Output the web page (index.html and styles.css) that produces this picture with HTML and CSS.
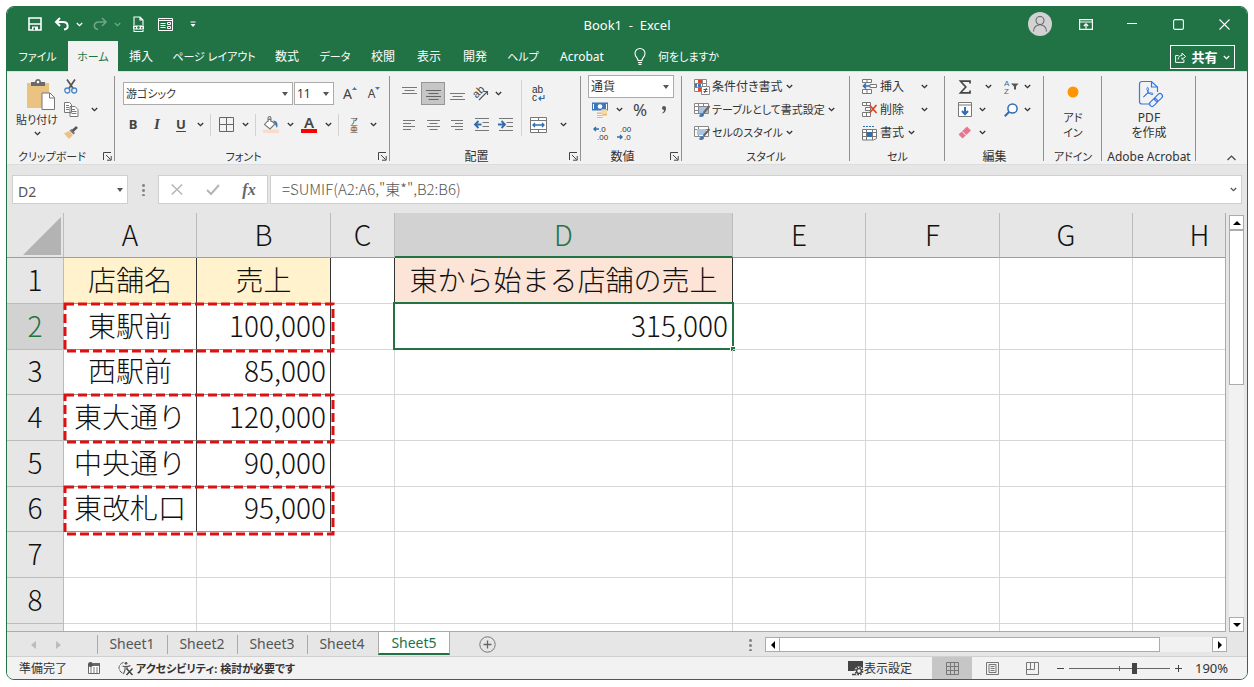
FILE: index.html
```html
<!DOCTYPE html>
<html lang="ja">
<head>
<meta charset="utf-8">
<title>Book1 - Excel</title>
<link rel="stylesheet" href="styles.css">
</head>
<body>
<svg class="defs" aria-hidden="true">
  <symbol id="chev" viewBox="0 0 7 5"><path d="M.8 1 3.5 3.7 6.2 1" fill="none" stroke="currentColor" stroke-width="1.3"/></symbol>
  <symbol id="tri" viewBox="0 0 6 4"><path d="M0 0h6L3 4z" fill="currentColor"/></symbol>
  <symbol id="launch" viewBox="0 0 9 9"><path d="M.5 8V.5H8M3 3l4.500 4.500M8.200 4v4.200H4" fill="none" stroke="#444"/></symbol>
</svg>
<div class="window">
  <header class="titlebar">
    <div class="quick">
      <button class="qb" aria-label="上書き保存"><svg width="14" height="14" viewBox="0 0 14 14"><path d="M1 1h12v12H1z" fill="none" stroke="#fff" stroke-width="1.6"/><path d="M1 7h12" stroke="#fff" stroke-width="1.4"/><path d="M4 9.500h6V13H4z" fill="#fff"/><path d="M5.500 10.500h1.500V13H5.500z" fill="#217346"/></svg></button>
      <button class="qb" aria-label="元に戻す"><svg width="16" height="14" viewBox="0 0 16 14"><path d="M6 1 2 5l4 4M2 5h7c6 0 6 7 1 7.500" fill="none" stroke="#fff" stroke-width="2"/></svg></button>
      <button class="qc" aria-label="元に戻す一覧"><svg width="7" height="5"><use href="#chev"/></svg></button>
      <button class="qb dim" aria-label="やり直し"><svg width="16" height="14" viewBox="0 0 16 14"><path d="M10 1l4 4-4 4M14 5H7C1 5 1 12 6 12.500" fill="none" stroke="#fff" stroke-width="1.600"/></svg></button>
      <button class="qc dim" aria-label="やり直し一覧"><svg width="7" height="5"><use href="#chev"/></svg></button>
      <button class="qb wide" aria-label="PDFに変換"><svg width="13" height="16" viewBox="0 0 13 16"><path d="M2 9V1h6l3 3v5M8 1v3h3M2 14v1.500h9V14" fill="none" stroke="#fff" stroke-width="1.100"/><path d="M1 9.500h11v4H1z" fill="#fff"/><circle cx="6.500" cy="11.500" r="1.300" fill="#217346"/><path d="M2.500 11h1.500v1.500H2.500zM9 11h1.500v1.500H9z" fill="#217346"/></svg></button>
      <button class="qb" aria-label="フォーム"><svg width="15" height="13" viewBox="0 0 15 13"><path d="M.5.5h14v12H.5zM1 2.500h13M2.500 5.500h5M2.500 7.500h5M2.500 9.500h5M9.500 4.500h3v2h-3zM9.500 8.500h3v2h-3z" fill="none" stroke="#fff"/></svg></button>
      <button class="qb" aria-label="カスタマイズ"><svg width="6" height="7" viewBox="0 0 6 7"><path d="M.5 1h5" stroke="#fff"/><path d="M.5 3h5L3 6z" fill="#fff"/></svg></button>
    </div>
    <h1 class="title">Book1&nbsp; -&nbsp; Excel</h1>
    <div class="wincontrols">
      <button class="wb" aria-label="アカウント"><svg width="24" height="24" viewBox="0 0 24 24"><circle cx="12" cy="12" r="12" fill="#d2d2d2"/><circle cx="12" cy="8.500" r="4" fill="none" stroke="#666" stroke-width="1.100"/><path d="M5.500 19.500c0-9 13-9 13 0" fill="none" stroke="#666" stroke-width="1.100"/></svg></button>
      <button class="wb" aria-label="リボンの表示オプション"><svg width="14" height="11" viewBox="0 0 14 11"><path d="M.6.6h12.800v9.800H.6zM1 3h12M7 9.500V5M4.800 7 7 4.800 9.200 7" fill="none" stroke="#fff" stroke-width="1.200"/></svg></button>
      <button class="wb" aria-label="最小化"><svg width="10" height="10" viewBox="0 0 10 10"><path d="M0 4.500h10" stroke="#fff"/></svg></button>
      <button class="wb" aria-label="最大化"><svg width="11" height="11" viewBox="0 0 11 11"><rect x=".6" y=".6" width="9.800" height="9.800" rx="1.500" fill="none" stroke="#fff" stroke-width="1.100"/></svg></button>
      <button class="wb" aria-label="閉じる"><svg width="11" height="11" viewBox="0 0 11 11"><path d="M.5.5l10 10M10.500.5l-10 10" stroke="#fff" stroke-width="1.100"/></svg></button>
    </div>
  </header>

  <nav class="tabs" aria-label="リボン">
    <button class="tab file kana">ファイル</button>
    <button class="tab mid kana active">ホーム</button>
    <button class="tab">挿入</button>
    <button class="tab long kana">ページ レイアウト</button>
    <button class="tab">数式</button>
    <button class="tab mid kana">データ</button>
    <button class="tab">校閲</button>
    <button class="tab">表示</button>
    <button class="tab">開発</button>
    <button class="tab mid kana">ヘルプ</button>
    <button class="tab acro">Acrobat</button>
    <button class="tell kana"><svg width="12" height="17" viewBox="0 0 12 17"><path d="M4 12.500c0-3-3-3.500-3-7a5 5 0 0 1 10 0c0 3.500-3 4-3 7zM4 14.500h4M4.500 16.400h3" fill="none" stroke="#fff" stroke-width="1.100"/></svg>何をしますか</button>
    <button class="share"><svg width="11" height="11" viewBox="0 0 11 11"><path d="M3.500 3.500H.6v6.900h8.300V7.500M3 7.500c.5-3 2-4 4-4V1l3.500 3.500L7 7.500V5.500" fill="none" stroke="#fff"/></svg>共有<svg width="7" height="5"><use href="#chev"/></svg></button>
  </nav>

  <section class="ribbon" aria-label="ホーム">
    <div class="group g-clip">
      <div class="body">
        <button class="big paste"><svg width="28" height="31" viewBox="0 0 28 31"><path d="M0 4h22v25H0z" fill="#eac282"/><path d="M4 3h4c0-4 6-4 6 0h4v4H4z" fill="#6a6a6a"/><circle cx="11" cy="3" r="1.300" fill="#fff"/><path d="M15 14h8l4.500 4.500v12H15z" fill="#fff" stroke="#777"/><path d="M22.500 14v5h5" fill="none" stroke="#777"/></svg><span class="kana">貼り付け</span><svg width="7" height="5"><use href="#chev"/></svg></button>
        <div class="stack">
          <div class="r"><button class="ib" aria-label="切り取り"><svg width="14" height="15" viewBox="0 0 14 15"><path d="M3 .5 9.500 10M11 .5 4.500 10" stroke="#555" stroke-width="1.700"/><circle cx="3.300" cy="11.500" r="2.500" fill="none" stroke="#4a86c5" stroke-width="1.300"/><circle cx="10.200" cy="11.500" r="2.500" fill="none" stroke="#4a86c5" stroke-width="1.300"/></svg></button></div>
          <div class="r"><button class="ib" aria-label="コピー"><svg width="15" height="15" viewBox="0 0 15 15"><path d="M.5.5h5l2 2v8h-7zM6 4.500h5l3 3v7H6z" fill="#fff" stroke="#777"/><path d="M2 3.500h3M2 5.500h3M2 7.500h3M7.500 7.500H11M7.500 9.500h5M7.500 11.500h5" stroke="#4a86c5"/></svg></button><button class="cv" aria-label="コピー一覧"><svg width="7" height="5"><use href="#chev"/></svg></button></div>
          <div class="r"><button class="ib" aria-label="書式のコピー"><svg width="14" height="13" viewBox="0 0 14 13"><path d="M0 7.500 5 5l4 4-4 4z" fill="#eac282"/><path d="m5.500 4.500 2-1.500 3.500 4-1.500 1.500z" fill="#777"/><path d="m8.500 5 4.500-4" stroke="#555" stroke-width="2.600"/></svg></button></div>
        </div>
      </div>
      <div class="foot kana">クリップボード<button class="lb" aria-label="クリップボードの詳細"><svg width="9" height="9"><use href="#launch"/></svg></button></div>
    </div>

    <div class="group g-font">
      <div class="body col">
        <div class="r tall">
          <div class="combo wfont"><select class="kana" aria-label="フォント"><option>游ゴシック</option></select><svg width="6" height="4"><use href="#tri"/></svg></div>
          <div class="combo wsize"><select aria-label="サイズ"><option>11</option></select><svg width="6" height="4"><use href="#tri"/></svg></div>
          <button class="ib grow" aria-label="フォントサイズの拡大">A<svg width="5" height="3" viewBox="0 0 5 3"><path d="M0 3h5L2.500 0z" fill="#4a78b5"/></svg></button>
          <button class="ib shrink" aria-label="フォントサイズの縮小">A<svg width="5" height="3" viewBox="0 0 5 3"><path d="M0 0h5L2.500 3z" fill="#4a78b5"/></svg></button>
        </div>
        <div class="r mid">
          <button class="ib bold">B</button><button class="ib ital">I</button><button class="ib under">U</button><button class="cv" aria-label="下線一覧"><svg width="7" height="5"><use href="#chev"/></svg></button>
          <i class="vs"></i>
          <button class="ib" aria-label="罫線"><svg width="15" height="15" viewBox="0 0 15 15"><path d="M.5.5h14v14H.5zM7.500.5v14M.5 7.500h14" fill="none" stroke="#666"/></svg></button><button class="cv" aria-label="罫線一覧"><svg width="7" height="5"><use href="#chev"/></svg></button>
          <i class="vs"></i>
          <button class="ib" aria-label="塗りつぶしの色"><svg width="16" height="17" viewBox="0 0 16 17"><path d="M0 13.500h16V17H0z" fill="#fbdccb"/><path d="m6.500 3 5.500 5-5 5-5.500-4.500zM5 6V2.500c0-2.500 3-2.500 3 0V6" fill="#fff" stroke="#777" stroke-width="1.100"/><path d="M10 4.500c4 0 5.500 3.500 4 7.500-1.500-2-1.500-4-4-7.500z" fill="#3f76b5"/></svg></button><button class="cv" aria-label="塗りつぶし一覧"><svg width="7" height="5"><use href="#chev"/></svg></button>
          <button class="ib fcol" aria-label="フォントの色">A</button><button class="cv" aria-label="フォントの色一覧"><svg width="7" height="5"><use href="#chev"/></svg></button>
          <i class="vs"></i>
          <button class="ib ruby" aria-label="ふりがな"><span>ア</span><span>亜</span></button><button class="cv" aria-label="ふりがな一覧"><svg width="7" height="5"><use href="#chev"/></svg></button>
        </div>
      </div>
      <div class="foot kana">フォント<button class="lb" aria-label="フォントの詳細"><svg width="9" height="9"><use href="#launch"/></svg></button></div>
    </div>

    <div class="group g-align">
      <div class="body">
        <div class="stack">
          <div class="r tall">
            <button class="ib" aria-label="上揃え"><svg width="15" height="16" viewBox="0 0 15 16"><path d="M0 1.500h15M2.500 4.500h10M0 7.500h15" stroke="#777"/></svg></button>
            <button class="ib on" aria-label="上下中央揃え"><svg width="15" height="16" viewBox="0 0 15 16"><path d="M0 4.500h15M2.500 7.500h10M0 10.500h15M2.500 13.500h10" stroke="#666"/></svg></button>
            <button class="ib" aria-label="下揃え"><svg width="15" height="16" viewBox="0 0 15 16"><path d="M0 7.500h15M2.500 10.500h10M0 13.500h15" stroke="#777"/></svg></button>
            <button class="ib" aria-label="方向"><svg width="16" height="15" viewBox="0 0 16 15"><text x="0" y="10" transform="rotate(-45 5 7)" font-size="11" class="uitxt" fill="#444">ab</text><path d="m6 14 8.500-8.500M11 5.500h3.500V9" fill="none" stroke="#555" stroke-width="1.100"/></svg></button><button class="cv near" aria-label="方向一覧"><svg width="7" height="5"><use href="#chev"/></svg></button>
          </div>
          <div class="r mid">
            <button class="ib" aria-label="左揃え"><svg width="12" height="12" viewBox="0 0 12 12"><path d="M0 1.500h12M0 4.500h8M0 7.500h12M0 10.500h8" stroke="#777"/></svg></button>
            <button class="ib" aria-label="中央揃え"><svg width="13" height="12" viewBox="0 0 13 12"><path d="M0 1.500h13M2.500 4.500h8M0 7.500h13M2.500 10.500h8" stroke="#777"/></svg></button>
            <button class="ib" aria-label="右揃え"><svg width="12" height="12" viewBox="0 0 12 12"><path d="M0 1.500h12M4 4.500h8M0 7.500h12M4 10.500h8" stroke="#777"/></svg></button>
            <button class="ib" aria-label="インデントを減らす"><svg width="15" height="14" viewBox="0 0 15 14"><path d="M1 .5h14M8.500 4.500H15M8.500 8.500H15M1 12.500h14" stroke="#777"/><path d="M7.500 6.500H1.500M4.500 3 1 6.500 4.500 10" fill="none" stroke="#2f6db3" stroke-width="1.800"/></svg></button>
            <button class="ib" aria-label="インデントを増やす"><svg width="15" height="14" viewBox="0 0 15 14"><path d="M1 .5h14M8.500 4.500H15M8.500 8.500H15M1 12.500h14" stroke="#777"/><path d="M0 6.500h6M3.500 3 7 6.500 3.500 10" fill="none" stroke="#2f6db3" stroke-width="1.800"/></svg></button>
          </div>
        </div>
        <i class="vs high"></i>
        <div class="stack">
          <div class="r tall"><button class="ib" aria-label="折り返して全体を表示する"><svg width="14" height="17" viewBox="0 0 14 17"><text x="1" y="8" font-size="10" class="uitxt" fill="#333">ab</text><text x="1" y="16" font-size="10" class="uitxt" fill="#333">c</text><path d="M13 10v3.500H8M10 11.500l-2 2 2 2" fill="none" stroke="#2f6db3" stroke-width="1.200"/></svg></button></div>
          <div class="r mid"><button class="ib" aria-label="セルを結合して中央揃え"><svg width="17" height="16" viewBox="0 0 17 16"><path d="M.5.5h16v15H.5zM.5 3.500h16M.5 12.500h16M8.500.5v3M8.500 12.500v3" fill="#fff" stroke="#777"/><path d="M3 8h11M5 6 3 8l2 2M12 6l2 2-2 2" fill="none" stroke="#2f6db3" stroke-width="1.300"/></svg></button><button class="cv far" aria-label="結合一覧"><svg width="7" height="5"><use href="#chev"/></svg></button></div>
        </div>
      </div>
      <div class="foot">配置<button class="lb" aria-label="配置の詳細"><svg width="9" height="9"><use href="#launch"/></svg></button></div>
    </div>

    <div class="group g-num">
      <div class="body col">
        <div class="r"><div class="combo wnum"><select aria-label="表示形式"><option>通貨</option></select><svg width="6" height="4"><use href="#tri"/></svg></div></div>
        <div class="r">
          <button class="ib" aria-label="通貨表示形式"><svg width="16" height="16" viewBox="0 0 16 16"><path d="M0 .5h16v8H0z" fill="#3f76b5"/><circle cx="8" cy="4.500" r="2.300" fill="#fff"/><path d="M1.500 2v5M14.500 2v5" stroke="#fff"/><path d="M9.500 7H15v6.500H9.500zM5 10.500h5.500V16H5z" fill="#f0b561"/><path d="M9.500 9H15M9.500 11H15M5 12.500h5.500M5 14.500h5.500" stroke="#f8f8f8"/></svg></button><button class="cv" aria-label="通貨一覧"><svg width="7" height="5"><use href="#chev"/></svg></button>
          <button class="ib pct">%</button><button class="ib comma" aria-label="桁区切り"><svg width="6" height="8" viewBox="0 0 6 8"><path d="M1 2a2 2 0 1 1 4 0c0 3-1 4.500-3.500 5.500V6.500C2.500 6 3 5 3 4 2 4 1 3.200 1 2z" fill="#555"/></svg></button>
        </div>
        <div class="r">
          <button class="ib" aria-label="小数点以下の表示桁数を増やす"><svg width="14" height="15" viewBox="0 0 14 15"><text x="6" y="7" font-size="8" class="uitxt" fill="#333">.0</text><text x="4" y="15" font-size="8" class="uitxt" fill="#333">.00</text><path d="M6 4H1M3 2 1 4l2 2" fill="none" stroke="#2f6db3" stroke-width="1.400"/></svg></button>
          <button class="ib" aria-label="小数点以下の表示桁数を減らす"><svg width="14" height="15" viewBox="0 0 14 15"><text x="3" y="7" font-size="8" class="uitxt" fill="#333">.00</text><text x="7" y="15" font-size="8" class="uitxt" fill="#333">.0</text><path d="M0 12h5M3 10l2 2-2 2" fill="none" stroke="#2f6db3" stroke-width="1.400"/></svg></button>
        </div>
      </div>
      <div class="foot">数値<button class="lb" aria-label="数値の詳細"><svg width="9" height="9"><use href="#launch"/></svg></button></div>
    </div>

    <div class="group g-style">
      <div class="body col">
        <button class="cmd"><svg width="16" height="16" viewBox="0 0 16 16"><path d="M.5.5h12v12H.5zM.5 4.500h12M.5 8.500h12M4.500.5v12M8.500.5v12" fill="#fff" stroke="#888"/><path d="M4 1h4v3H4zM4 9h3v3H4z" fill="#d9472b"/><path d="M4 5h3v3H4zM1 5h2v3H1z" fill="#3f76b5"/><path d="M7.500 7.500h8v8h-8z" fill="#fff" stroke="#888"/><path d="M9.500 10.500h4M9.500 12.500h4M12.500 9l-2 5" stroke="#555"/></svg><span>条件付き書式</span><svg width="7" height="5"><use href="#chev"/></svg></button>
        <button class="cmd"><svg width="16" height="16" viewBox="0 0 16 16"><path d="M.5 1.500h14v10H.5zM.5 4.500h14M.5 8.500h14M4.500 1.500v10M9.500 1.500v10" fill="#fff" stroke="#888"/><path d="M5 5h9v6H5z" fill="#a9c5e2"/><path d="m15.500 4-6 7" stroke="#666" stroke-width="2"/><path d="M5 14.500c1-4 5-4 5-1.500 0 2-3 2.500-5 1.500z" fill="#3f76b5"/></svg><span class="kana">テーブルとして書式設定</span><svg width="7" height="5"><use href="#chev"/></svg></button>
        <button class="cmd"><svg width="16" height="16" viewBox="0 0 16 16"><path d="M.5 1.500h14v10H.5zM.5 4.500h14M4.500 1.500v10" fill="#fff" stroke="#888"/><path d="M3 4h9v6H3z" fill="#a9c5e2"/><path d="m15.500 4-6 7" stroke="#666" stroke-width="2"/><path d="M5 14.500c1-4 5-4 5-1.500 0 2-3 2.500-5 1.500z" fill="#3f76b5"/></svg><span class="kana">セルのスタイル</span><svg width="7" height="5"><use href="#chev"/></svg></button>
      </div>
      <div class="foot kana">スタイル</div>
    </div>

    <div class="group g-cell">
      <div class="body col">
        <button class="cmd split"><svg width="15" height="15" viewBox="0 0 15 15"><path d="M.5.5h9v3h-9zM5 .5v3M.5 10.500h9v4h-9zM5 10.500v4M8 5.500h6.500v3H8z" fill="#fff" stroke="#777"/><path d="M8 7H1.500M4 4.500 1.500 7 4 9.500" fill="none" stroke="#2f6db3" stroke-width="1.600"/></svg><span>挿入</span><svg width="7" height="5"><use href="#chev"/></svg></button>
        <button class="cmd split"><svg width="15" height="15" viewBox="0 0 15 15"><path d="M.5.5h8v3h-8zM4.500.5v3M.5 10.500h8v4h-8zM4.500 10.500v4M3.500 5.500h5v3h-5z" fill="#fff" stroke="#777"/><path d="m7.500 3 7 8M14.500 3l-7 8" stroke="#d9472b" stroke-width="1.800"/></svg><span>削除</span><svg width="7" height="5"><use href="#chev"/></svg></button>
        <button class="cmd"><svg width="15" height="16" viewBox="0 0 15 16"><path d="M1 1.500h11" stroke="#2f6db3" stroke-dasharray="2 1"/><path d="M.5 4.500h14v9l-3 1.500H.5zM.5 7.500h14M.5 11.500h14M4.500 4.500V15M10.500 4.500V15" fill="#fff" stroke="#777"/><path d="M5 7h5v5H5z" fill="#2f6db3"/></svg><span>書式</span><svg width="7" height="5"><use href="#chev"/></svg></button>
      </div>
      <div class="foot kana">セル</div>
    </div>

    <div class="group g-edit">
      <div class="body">
        <div class="stack">
          <div class="r"><button class="ib" aria-label="オートSUM"><svg width="12" height="14" viewBox="0 0 12 14"><path d="M11 3.500V1.200H1.500L6.800 7l-5.300 5.800H11v-2.300" fill="none" stroke="#444" stroke-width="1.700"/></svg></button><button class="cv far" aria-label="SUM一覧"><svg width="7" height="5"><use href="#chev"/></svg></button></div>
          <div class="r"><button class="ib" aria-label="フィル"><svg width="14" height="15" viewBox="0 0 14 15"><path d="M.5.5h13v14H.5zM.5 3h13" fill="#fff" stroke="#777"/><path d="M7 5v7M4 9l3 3.200L10 9" fill="none" stroke="#2f6db3" stroke-width="2"/></svg></button><button class="cv" aria-label="フィル一覧"><svg width="7" height="5"><use href="#chev"/></svg></button></div>
          <div class="r"><button class="ib" aria-label="クリア"><svg width="14" height="13" viewBox="0 0 14 13"><path d="m9 .5 4 4-8.500 8L.5 8.500z" fill="#e5788f"/><path d="m4 5.300 4 4" stroke="#fff"/></svg></button><button class="cv" aria-label="クリア一覧"><svg width="7" height="5"><use href="#chev"/></svg></button></div>
        </div>
        <div class="stack second">
          <div class="r"><button class="ib" aria-label="並べ替えとフィルター"><svg width="15" height="14" viewBox="0 0 15 14"><text x="0" y="6" font-size="8" class="uitxt" fill="#2f6db3">A</text><text x="0" y="14" font-size="8" class="uitxt" fill="#8a3fa8">Z</text><path d="M7 3.500h7.500L12 6.500v3h-2v-3z" fill="#555"/></svg></button><button class="cv" aria-label="並べ替え一覧"><svg width="7" height="5"><use href="#chev"/></svg></button></div>
          <div class="r"><button class="ib" aria-label="検索と選択"><svg width="14" height="14" viewBox="0 0 14 14"><circle cx="8.500" cy="5.500" r="4.600" fill="#fff" stroke="#2f6db3" stroke-width="1.500"/><path d="M5.200 8.800.8 13.200" stroke="#2f6db3" stroke-width="2"/></svg></button><button class="cv" aria-label="検索一覧"><svg width="7" height="5"><use href="#chev"/></svg></button></div>
        </div>
      </div>
      <div class="foot">編集</div>
    </div>

    <div class="group g-add">
      <div class="body"><button class="big"><svg width="28" height="35" viewBox="0 0 28 35"><circle cx="14" cy="17" r="5.500" fill="#ff9500"/></svg><span class="kana">アド<br>イン</span></button></div>
      <div class="foot kana">アドイン</div>
    </div>

    <div class="group g-pdf">
      <div class="body"><button class="big"><svg width="28" height="35" viewBox="0 0 28 35"><g fill="none" stroke="#3578e5" stroke-width="1.200"><path d="M14 29H7c-1.500 0-2.500-1-2.500-2.500V9c0-1.500 1-2.500 2.500-2.500h9.500L22.500 12v5M16.500 6.500V12h6"/><path d="M8.500 22c3-1.500 5.500-6 5-8.500-.5-2-2-1-1.500 1 1 3.500 3 5 5.500 5 1.500-.5 0-2-2.500-1.500-3 0-5 1.500-6.500 4z" stroke-width="1"/><rect x="14" y="25" width="9" height="5" rx="2.500" transform="rotate(-45 18.500 27.500)"/><rect x="19" y="20" width="9" height="5" rx="2.500" transform="rotate(-45 23.500 22.500)"/></g></svg><span>PDF<br>を作成</span></button></div>
      <div class="foot">Adobe Acrobat</div>
    </div>
    <button class="collapse" aria-label="リボンを折りたたむ"><svg width="9" height="6" viewBox="0 0 9 6"><path d="M.5 5 4.500 1l4 4" fill="none" stroke="#444" stroke-width="1.200"/></svg></button>
  </section>

  <div class="formulabar">
    <div class="combo namebox"><input type="text" value="D2" aria-label="名前ボックス"><svg width="6" height="4"><use href="#tri"/></svg></div>
    <i class="dots"></i>
    <div class="fxbox">
      <button aria-label="キャンセル"><svg width="12" height="11" viewBox="0 0 12 11"><path d="m.7.5 10.500 10M11.200.5.7 10.500" stroke="#b5b5b5" stroke-width="1.500"/></svg></button>
      <button aria-label="入力"><svg width="14" height="11" viewBox="0 0 14 11"><path d="m1 6 4 4L13 1" fill="none" stroke="#b5b5b5" stroke-width="2"/></svg></button>
      <button class="fx" aria-label="関数の挿入">fx</button>
    </div>
    <div class="combo fline"><input type="text" value='=SUMIF(A2:A6,"東*",B2:B6)' aria-label="数式バー"><svg width="7" height="5"><use href="#chev"/></svg></div>
  </div>

  <main class="work">
    <div class="gridview">
      <table class="sheet">
        <colgroup><col class="c0"><col class="ca"><col class="cb"><col class="cc"><col class="cd"><col class="ca"><col class="cb"><col class="ca"><col class="cb"></colgroup>
        <thead><tr><th class="all"><svg width="38" height="38" viewBox="0 0 38 38"><path d="M38 0v38H0z" fill="#b3b3b3"/></svg></th><th>A</th><th>B</th><th>C</th><th class="sel">D</th><th>E</th><th>F</th><th>G</th><th>H</th></tr></thead>
        <tbody>
          <tr><th>1</th><td class="bx yel">店舗名</td><td class="bx yel">売上</td><td class="pre"></td><td class="bx org">東から始まる店舗の売上</td><td></td><td></td><td></td><td></td></tr>
          <tr><th class="sel">2</th><td class="bx"><svg class="mark"><rect width="100%" height="100%"/></svg>東駅前</td><td class="bx num">100,000</td><td></td><td class="num cur">315,000</td><td></td><td></td><td></td><td></td></tr>
          <tr><th>3</th><td class="bx">西駅前</td><td class="bx num">85,000</td><td></td><td></td><td></td><td></td><td></td><td></td></tr>
          <tr><th>4</th><td class="bx"><svg class="mark"><rect width="100%" height="100%"/></svg>東大通り</td><td class="bx num">120,000</td><td></td><td></td><td></td><td></td><td></td><td></td></tr>
          <tr><th>5</th><td class="bx">中央通り</td><td class="bx num">90,000</td><td></td><td></td><td></td><td></td><td></td><td></td></tr>
          <tr><th>6</th><td class="bx"><svg class="mark"><rect width="100%" height="100%"/></svg>東改札口</td><td class="bx num">95,000</td><td></td><td></td><td></td><td></td><td></td><td></td></tr>
          <tr><th>7</th><td></td><td></td><td></td><td></td><td></td><td></td><td></td><td></td></tr>
          <tr><th>8</th><td></td><td></td><td></td><td></td><td></td><td></td><td></td><td></td></tr>
          <tr><th></th><td></td><td></td><td></td><td></td><td></td><td></td><td></td><td></td></tr>
        </tbody>
      </table>
    </div>
    <div class="vscroll">
      <button class="sb" aria-label="上へ"><svg width="8" height="4" viewBox="0 0 8 4"><path d="M0 4h8L4 0z"/></svg></button>
      <div class="vtrack"><div class="vthumb"></div></div>
      <button class="sb" aria-label="下へ"><svg width="8" height="4" viewBox="0 0 8 4"><path d="M0 0h8L4 4z"/></svg></button>
    </div>
  </main>

  <div class="sheetbar">
    <div class="arrows"><svg width="5" height="8" viewBox="0 0 5 8"><path d="M5 0v8L0 4z" fill="#bbb"/></svg><svg width="5" height="8" viewBox="0 0 5 8"><path d="M0 0v8l5-4z" fill="#bbb"/></svg></div>
    <button class="st">Sheet1</button><button class="st">Sheet2</button><button class="st">Sheet3</button><button class="st">Sheet4</button><button class="st open">Sheet5</button>
    <button class="plus" aria-label="新しいシート"><svg width="17" height="17" viewBox="0 0 17 17"><circle cx="8.500" cy="8.500" r="7.700" fill="none" stroke="#777"/><path d="M4.500 8.500h8M8.500 4.500v8" stroke="#666" stroke-width="1.300"/></svg></button>
    <i class="dots"></i>
    <div class="hscroll">
      <button class="sb" aria-label="左へ"><svg width="4" height="8" viewBox="0 0 4 8"><path d="M4 0v8L0 4z"/></svg></button>
      <div class="htrack"><div class="hthumb"></div></div>
      <button class="sb" aria-label="右へ"><svg width="4" height="8" viewBox="0 0 4 8"><path d="M0 0v8l4-4z"/></svg></button>
    </div>
  </div>

  <footer class="status">
    <span>準備完了</span>
    <svg class="rec" width="12" height="12" viewBox="0 0 12 12"><path d="M.5 3.500h11v8H.5z" fill="#fff" stroke="#666"/><path d="M5 1h7v3H5z" fill="#666"/><circle cx="2.500" cy="2.500" r="2.500" fill="#555"/><path d="M2 6h8M2 8h8M2 10h8" stroke="#777" stroke-dasharray="2 1"/></svg>
    <button class="acc kana"><svg width="16" height="15" viewBox="0 0 16 15"><path d="M5.500 1.500A5.500 5.500 0 0 0 4.500 12" fill="none" stroke="#555" stroke-dasharray="4 1"/><circle cx="8" cy="2.300" r="1.400" fill="#555"/><path d="M4.500 5c2.500 1 5 1 8-.5M7 6v3l-1.500 4M9 6v2" fill="none" stroke="#555" stroke-width="1.100"/><path d="m8.500 7.500 6 6.500M14.500 7.500l-6 6.500" stroke="#444" stroke-width="1.500"/></svg>アクセシビリティ: 検討が必要です</button>
    <button class="disp"><svg width="16" height="15" viewBox="0 0 16 15"><path d="M0 0h15v10H0z" fill="#444"/><path d="M4 13.500h5" stroke="#444" stroke-width="1.500"/><circle cx="11" cy="10" r="4.500" fill="#f2f2f2"/><circle cx="11" cy="10" r="3.600" fill="none" stroke="#444" stroke-width="1.600" stroke-dasharray="1.600 1.200"/><circle cx="11" cy="10" r="2.400" fill="#f2f2f2" stroke="#444" stroke-width="1.400"/></svg>表示設定</button>
    <button class="vw on" aria-label="標準"><svg width="13" height="13" viewBox="0 0 13 13"><path d="M.5.5h12v12H.5zM.5 4.500h12M.5 8.500h12M4.500.5v12M8.500.5v12" fill="none" stroke="#777"/></svg></button>
    <button class="vw" aria-label="ページレイアウト"><svg width="13" height="13" viewBox="0 0 13 13"><path d="M.5.5h12v12H.5zM3 2.500h7v8H3zM4.500 4.500h4M4.500 6.500h4M4.500 8.500h4" fill="none" stroke="#777"/></svg></button>
    <button class="vw" aria-label="改ページプレビュー"><svg width="13" height="13" viewBox="0 0 13 13"><path d="M.5.5h12v12H.5zM4.500.5v7M8.500.5v7M.5 7.500h8" fill="none" stroke="#777"/></svg></button>
    <button class="zb" aria-label="縮小"><svg width="9" height="9" viewBox="0 0 9 9"><path d="M1 4.500h7" stroke="#444"/></svg></button>
    <input class="zoom" type="range" min="0" max="100" value="66" aria-label="ズーム">
    <button class="zb" aria-label="拡大"><svg width="9" height="9" viewBox="0 0 9 9"><path d="M1 4.500h7M4.500 1v7" stroke="#444"/></svg></button>
    <span class="pc">190%</span>
  </footer>
</div>
</body>
</html>
```
FILE: styles.css
```css
* { box-sizing: border-box; }
body {
  margin: 0;
  padding: 6px 6px 7px;
  height: 100vh;
  background: #fff;
  color: #333;
  font: 12px/15px "Noto Sans", "Noto Sans CJK JP", sans-serif;
  font-feature-settings: "palt";
}
button, select, input { font: inherit; color: inherit; font-feature-settings: inherit; }
button { border: 0; background: none; padding: 0; margin: 0; white-space: nowrap; }
svg { flex: none; display: block; overflow: visible; }
.defs { position: absolute; width: 0; height: 0; }
.kana { font-size: 11px; }
.uitxt { font-family: "Liberation Sans", sans-serif; }

.window {
  height: 100%;
  display: flex;
  flex-direction: column;
  border: 1px solid #217346;
  border-radius: 8px;
  overflow: hidden;
  background: #e6e6e6;
}

/* title bar */
.titlebar { flex: none; height: 34px; display: grid; grid-template-columns: 1fr auto 1fr; align-items: center; background: #217346; color: #fff; }
.quick { display: flex; align-items: center; padding-left: 14px; }
.qb { width: 27px; height: 24px; display: grid; place-items: center; }
.qb.wide { width: 28px; }
.qc { width: 9px; height: 24px; display: grid; place-items: center; margin-right: 2px; }
.dim { opacity: .35; }
.title { margin: 0; font-size: 13px; font-weight: 400; padding-top: 2px; }
.wincontrols { display: flex; justify-content: flex-end; }
.wb { width: 46px; height: 30px; display: grid; place-items: center; }

/* ribbon tabs */
.tabs { flex: none; height: 31px; display: flex; align-items: stretch; background: #217346; color: #fff; border-bottom: 1px solid #d5e3da; }
.tab { width: 46px; }
.tab.mid { width: 50px; }
.tab.file { width: 61px; }
.tab.long { width: 100px; }
.tab.acro { width: 68px; }
.tab.active { background: #f2f2f2; color: #217346; margin-bottom: -1px; }
.tell { display: flex; align-items: center; gap: 12px; margin-left: 18px; }
.share { margin: 4px 12px 2px auto; width: 65px; display: flex; align-items: center; justify-content: center; gap: 5px; border: 1px solid #fff; font-size: 13px; font-weight: 700; }

/* ribbon */
.ribbon { flex: none; display: flex; background: #f2f2f2; border-bottom: 1px solid #dcdcdc; }
.group { flex: none; display: flex; flex-direction: column; padding-top: 3px; background: linear-gradient(#919191, #919191) right 4px / 1px 85px no-repeat; }
.body { height: 69px; display: flex; }
.body.col { flex-direction: column; }
.foot { height: 20px; padding-top: 5px; text-align: center; position: relative; white-space: nowrap; }
.lb { position: absolute; right: 3px; top: 8px; }
.g-clip { width: 108px; }
.g-clip .foot { padding-right: 18px; }
.g-font { width: 275px; }
.g-font .foot, .g-align .foot, .g-num .foot { padding-right: 18px; }
.g-align { width: 191px; }
.g-num { width: 101px; }
.g-style { width: 168px; }
.g-cell { width: 95px; }
.g-edit { width: 99px; }
.g-add { width: 58px; }
.g-pdf { width: 94px; }
.big { flex: 1; display: flex; flex-direction: column; align-items: center; }
.big.paste { flex: none; width: 48px; margin-left: 6px; padding-top: 4px; gap: 2px; }
.big.paste svg:first-child { margin-left: 7px; }
.big.paste svg:last-child { margin-top: 2px; }
.r { height: 23px; display: flex; align-items: center; }
.r.tall { height: 37px; }
.r.mid { height: 25px; }
.ib { width: 24px; height: 23px; flex: none; display: grid; place-items: center; color: #444; }
.ib.on { background: #c6c6c6; border: 1px solid #969696; }
.cv { width: 14px; height: 23px; flex: none; display: grid; place-items: center; }
.cv.far { margin-left: 6px; }
.cv.near { width: 10px; }
.vs { width: 1px; height: 22px; background: #d2d2d2; margin: 0 4px; }
.vs.high { height: 56px; margin: 5px 4px 0; }
.g-clip .ib { width: 20px; }
.g-clip .cv { margin-left: 6px; }
.g-font .r { padding-left: 6px; }
.g-font .vs { margin: 0 3px; }
.g-font .r.tall { padding-left: 8px; }
.g-align .body { padding-left: 7px; }
.g-num .r { padding-left: 7px; }
.combo { display: grid; align-items: center; height: 23px; background: #fff; border: 1px solid #ababab; }
.combo > * { grid-area: 1 / 1; }
.combo > svg { justify-self: end; margin-right: 4px; color: #555; pointer-events: none; }
.combo select, .combo input { appearance: none; width: 100%; height: 100%; border: 0; background: none; padding: 0 0 0 2px; border-radius: 0; outline: 0; }
.wfont { width: 170px; margin-right: 1px; }
.wsize { width: 40px; margin-right: 4px; }
.wnum { width: 86px; }
.grow, .shrink { display: flex; align-items: center; justify-content: center; font-size: 12px; }
.grow svg, .shrink svg { margin-bottom: 10px; }
.grow { font-size: 14px; }
.bold { font-weight: 700; font-size: 13px; }
.ital { font-family: "Liberation Serif", serif; font-style: italic; font-weight: 700; font-size: 15px; }
.under { font-weight: 700; font-size: 13px; text-decoration: underline; text-underline-offset: 2px; }
.fcol { width: 16px; height: 17px; margin: 0 4px; border-bottom: 4px solid #f00; font-size: 15px; line-height: 13px; font-weight: 600; }
.ruby { font-size: 8px; line-height: 8px; align-content: center; }
.pct { font-size: 17px; margin-left: 2px; }
.cmd { height: 23px; display: flex; align-items: center; gap: 2px; padding-left: 12px; }
.cmd svg:last-child { margin-left: 1px; }
.g-cell .cmd { gap: 3px; }
.cmd.split svg:last-child { margin-left: 14px; }
.g-edit .stack { padding-left: 8px; }
.g-edit .stack.second { padding-left: 2px; margin-left: auto; padding-right: 12px; }
.g-edit .second .ib { width: 22px; }
.g-edit .cv { width: 10px; }
.collapse { margin: auto 8px 3px auto; width: 12px; }

/* formula bar */
.formulabar { flex: none; display: flex; padding: 10px 5px 9px; color: #555; }
.formulabar .combo { height: 29px; border-color: #cfcfcf; }
.namebox { width: 116px; font-size: 14px; }
.formulabar .namebox input { padding-left: 5px; padding-top: 3px; }
.dots { width: 3px; height: 13px; align-self: center; background: radial-gradient(circle, #888 1px, transparent 2px) 0 0 / 3px 5px; }
.formulabar .dots { margin: 0 13px 0 14px; }
.fxbox { width: 110px; background: #fff; border: 1px solid #cfcfcf; display: grid; grid-template-columns: repeat(3, 36px); margin-right: 2px; }
.fxbox button { display: grid; place-items: center; }
.fx { font: italic 700 16px/20px "Liberation Serif", serif; color: #666; }
.fline { flex: 1; font-family: "Noto Sans CJK JP", sans-serif; font-size: 15px; font-weight: 300; }
.formulabar .fline input { padding-left: 11px; padding-bottom: 2px; }

/* worksheet */
.work { flex: 1; min-height: 0; display: flex; }
.gridview { flex: 1; min-width: 0; overflow: hidden; border-right: 1px solid #ababab; border-bottom: 1px solid #ababab; background: #fff; }
.sheet { width: 1199px; table-layout: fixed; border-collapse: separate; border-spacing: 0; font: 300 28px/40px "Noto Sans CJK JP", sans-serif; font-feature-settings: normal; color: #111; }
.c0 { width: 57px; }
.ca { width: 133px; }
.cb { width: 134px; }
.cc { width: 64px; }
.cd { width: 338px; }
.sheet th { font-weight: 300; padding: 0 0 4px; background: #e6e6e6; border-right: 1px solid #bcbcbc; border-bottom: 1px solid #bcbcbc; }
.sheet thead th { height: 45px; padding-bottom: 2px; border-bottom-color: #9d9d9d; }
.sheet thead .all { vertical-align: bottom; padding: 0; }
.all svg { margin: 0 2px 2px auto; }
.sheet th.sel { background: #d2d2d2; color: #217346; }
.sheet thead th.sel { border-bottom: 2px solid #217346; }
.sheet td { height: 46px; padding: 0 0 4px; text-align: center; border-right: 1px solid #d6d6d6; border-bottom: 1px solid #d6d6d6; position: relative; white-space: nowrap; }
.sheet tr:nth-child(3n) td { height: 45px; }
.sheet td.bx { border-right-color: #333; border-bottom-color: #999; }
.sheet td.pre { border-right-color: #333; }
.sheet td.yel { background: #fff2cc; }
.sheet td.org { background: #fce4d6; }
.sheet td.num { text-align: right; padding-right: 4px; }
.cur::before { content: ""; position: absolute; inset: -2px -2px -1px -2px; border: 2px solid #217346; }
.cur::after { content: ""; position: absolute; right: -3px; bottom: -2px; width: 4px; height: 4px; background: #217346; outline: 1px solid #fff; }
.mark { position: absolute; left: 1px; top: 0; width: 268px; height: 47px; overflow: visible; z-index: 1; }
.mark rect { fill: none; stroke: #dd1111; stroke-width: 3px; stroke-dasharray: 9 4; }

/* scrollbars */
.vscroll { width: 21px; padding: 2px 3px 0; display: flex; flex-direction: column; }
.sb { flex: none; width: 15px; height: 15px; display: grid; place-items: center; background: #fff; border: 1px solid #ababab; }
.vtrack { flex: 1; background: #f1f1f1; }
.vthumb { height: 40%; background: #fff; border: 1px solid #ababab; }
.hscroll { width: 462px; display: flex; margin: 5px 20px 0 13px; }
.htrack { flex: 1; height: 15px; background: #f1f1f1; }
.hthumb { width: 88%; height: 100%; background: #fff; border: 1px solid #ababab; border-left: 0; }

/* sheet tabs */
.sheetbar { flex: none; height: 25px; display: flex; border-bottom: 1px solid #d0d0d0; }
.arrows { width: 90px; display: flex; gap: 20px; padding: 9px 0 0 24px; }
.st { height: 23px; width: 70px; color: #555; font-size: 14px; background: linear-gradient(#aaa, #aaa) left 3px / 1px 19px no-repeat; }
.st.open { width: 72px; margin-left: 1px; background: #fff; color: #217346; border: solid #ababab; border-width: 0 1px; border-bottom: 2px solid #217346; }
.plus { margin: 0 0 0 29px; align-self: center; }
.sheetbar .dots { margin-left: auto; }

/* status bar */
.status { flex: none; height: 22px; display: flex; align-items: center; background: #f2f2f2; padding-left: 12px; }
.rec { margin-left: 21px; }
.acc { display: flex; align-items: center; gap: 2px; margin-left: 18px; font-weight: 700; }
.disp { display: flex; align-items: center; margin: 0 20px 0 auto; }
.vw { width: 40px; height: 22px; display: grid; place-items: center; }
.vw.on { background: #c6c6c6; }
.zb { width: 9px; margin: 0 4px; }
.zoom { appearance: none; width: 101px; height: 15px; margin: 0; background: linear-gradient(#666, #666) center / 100% 1px no-repeat, linear-gradient(#666, #666) center / 1px 5px no-repeat; }
.zoom::-webkit-slider-thumb { appearance: none; width: 5px; height: 11px; background: #444; }
.pc { width: 60px; font-size: 13px; padding-left: 8px; }
```
